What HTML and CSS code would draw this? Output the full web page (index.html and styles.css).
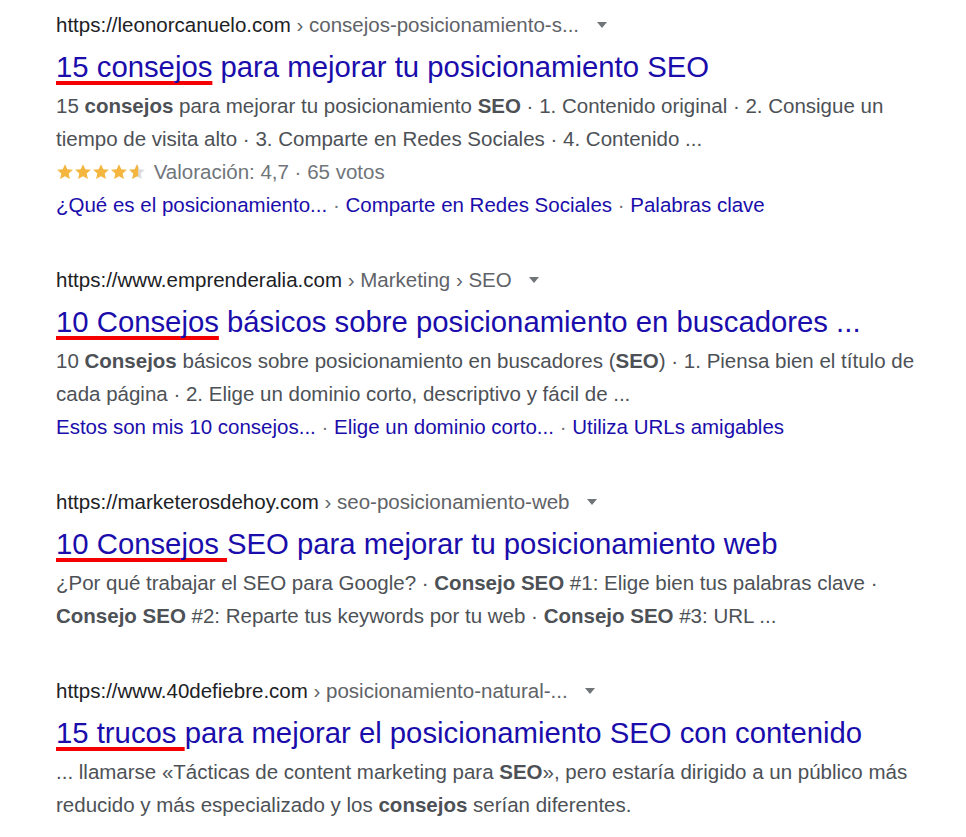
FILE: index.html
```html
<!DOCTYPE html>
<html lang="es">
<head>
    <meta charset="UTF-8">
    <meta name="viewport" content="width=device-width, initial-scale=1.0">
    <title>consejos SEO - Buscar</title>
    <link rel="stylesheet" href="styles.css">
</head>
<body>
    <main class="results">

        <div class="result">
            <div class="cite">
                <span class="domain">https://leonorcanuelo.com</span>
                <span class="path">› consejos-posicionamiento-s...</span>
                <span class="caret"></span>
            </div>
            <h3 class="title"><span class="mark">15 consejos</span> para mejorar tu posicionamiento SEO</h3>
            <div class="snippet">
                15 <b>consejos</b> para mejorar tu posicionamiento <b>SEO</b> · 1. Contenido original · 2. Consigue un
                tiempo de visita alto · 3. Comparte en Redes Sociales · 4. Contenido ...
            </div>
            <div class="rating">
                <span class="stars">
                    <svg viewBox="0 0 24 24"><path d="M12 1.5l3.1 6.8 7.4.8-5.6 5 1.6 7.3L12 17.6l-6.5 3.8 1.6-7.3-5.6-5 7.4-.8z"/></svg>
                    <svg viewBox="0 0 24 24"><path d="M12 1.5l3.1 6.8 7.4.8-5.6 5 1.6 7.3L12 17.6l-6.5 3.8 1.6-7.3-5.6-5 7.4-.8z"/></svg>
                    <svg viewBox="0 0 24 24"><path d="M12 1.5l3.1 6.8 7.4.8-5.6 5 1.6 7.3L12 17.6l-6.5 3.8 1.6-7.3-5.6-5 7.4-.8z"/></svg>
                    <svg viewBox="0 0 24 24"><path d="M12 1.5l3.1 6.8 7.4.8-5.6 5 1.6 7.3L12 17.6l-6.5 3.8 1.6-7.3-5.6-5 7.4-.8z"/></svg>
                    <svg viewBox="0 0 24 24">
                        <path class="empty" d="M12 1.5l3.1 6.8 7.4.8-5.6 5 1.6 7.3L12 17.6l-6.5 3.8 1.6-7.3-5.6-5 7.4-.8z"/>
                        <path d="M12 1.5l1.6 3.5v13.5L12 17.6l-6.5 3.8 1.6-7.3-5.6-5 7.4-.8z"/>
                    </svg>
                </span>
                Valoración: 4,7 · 65 votos
            </div>
            <div class="sitelinks">
                <a href="#">¿Qué es el posicionamiento...</a><span class="sep"> · </span><a href="#">Comparte en Redes Sociales</a><span class="sep"> · </span><a href="#">Palabras clave</a>
            </div>
        </div>

        <div class="result">
            <div class="cite">
                <span class="domain">https://www.emprenderalia.com</span>
                <span class="path">› Marketing › SEO</span>
                <span class="caret"></span>
            </div>
            <h3 class="title"><span class="mark">10 Consejos</span> básicos sobre posicionamiento en buscadores ...</h3>
            <div class="snippet">
                10 <b>Consejos</b> básicos sobre posicionamiento en buscadores (<b>SEO</b>) · 1. Piensa bien el título de
                cada página · 2. Elige un dominio corto, descriptivo y fácil de ...
            </div>
            <div class="sitelinks">
                <a href="#">Estos son mis 10 consejos...</a><span class="sep"> · </span><a href="#">Elige un dominio corto...</a><span class="sep"> · </span><a href="#">Utiliza URLs amigables</a>
            </div>
        </div>

        <div class="result">
            <div class="cite">
                <span class="domain">https://marketerosdehoy.com</span>
                <span class="path">› seo-posicionamiento-web</span>
                <span class="caret"></span>
            </div>
            <h3 class="title"><span class="mark">10 Consejos </span>SEO para mejorar tu posicionamiento web</h3>
            <div class="snippet">
                ¿Por qué trabajar el SEO para Google? · <b>Consejo SEO</b> #1: Elige bien tus palabras clave ·
                <b>Consejo SEO</b> #2: Reparte tus keywords por tu web · <b>Consejo SEO</b> #3: URL ...
            </div>
        </div>

        <div class="result">
            <div class="cite">
                <span class="domain">https://www.40defiebre.com</span>
                <span class="path">› posicionamiento-natural-...</span>
                <span class="caret"></span>
            </div>
            <h3 class="title"><span class="mark">15 trucos </span>para mejorar el posicionamiento SEO con contenido</h3>
            <div class="snippet">
                ... llamarse «Tácticas de content marketing para <b>SEO</b>», pero estaría dirigido a un público más
                reducido y más especializado y los <b>consejos</b> serían diferentes.
            </div>
        </div>

    </main>
</body>
</html>
```

FILE: styles.css
```css
body {
    margin: 0;
    background: #fff;
    font-family: "Liberation Sans", Arial, sans-serif;
    font-size: 20.5px;
    color: #4d5156;
}
.results {
    padding: 9px 0 0 56px;
    width: 860px;
}
.result {
    margin-bottom: 43px;
}
.cite {
    line-height: 32px;
    white-space: nowrap;
}
.domain {
    color: #202124;
}
.path {
    color: #5f6368;
}
.caret {
    display: inline-block;
    width: 0;
    height: 0;
    margin-left: 12px;
    border-left: 5px solid transparent;
    border-right: 5px solid transparent;
    border-top: 6px solid #70757a;
    vertical-align: 4px;
}
.title {
    margin: 4px 0 0;
    font-size: 29.3px;
    font-weight: normal;
    line-height: 44px;
    color: #1a0dab;
    white-space: nowrap;
}
.mark {
    text-decoration: underline;
    text-decoration-color: #f40000;
    text-decoration-thickness: 4px;
    text-underline-offset: 4px;
    text-decoration-skip-ink: none;
}
.snippet {
    line-height: 33px;
}
.snippet b {
    color: #4d5156;
}
.rating {
    line-height: 33px;
    color: #70757a;
}
.stars {
    display: inline-flex;
    margin-right: 2px;
    vertical-align: -2px;
}
.stars svg {
    width: 18px;
    height: 18px;
    fill: #f4b63f;
}
.stars .empty {
    fill: #dadce0;
}
.sitelinks {
    line-height: 33px;
}
.sitelinks a {
    color: #1a0dab;
    text-decoration: none;
}
.sep {
    color: #70757a;
}
```
